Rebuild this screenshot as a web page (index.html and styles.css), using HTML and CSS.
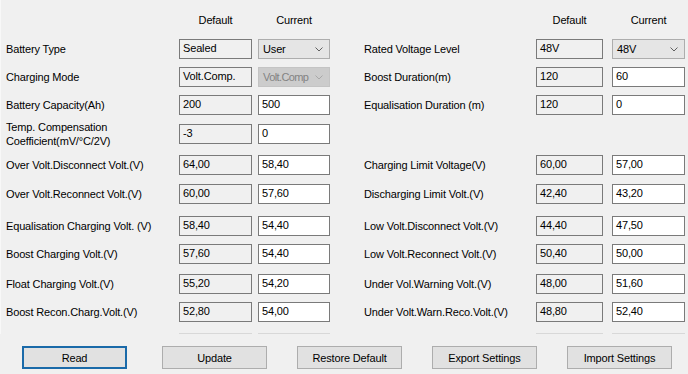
FILE: index.html
```html
<!DOCTYPE html>
<html>
<head>
<meta charset="utf-8">
<link rel="stylesheet" href="styles.css">
</head>
<body>
<div class="panel">
  <div class="grid">
    <div></div><div class="hdr">Default</div><div></div><div class="hdr">Current</div><div></div>
    <div></div><div class="hdr">Default</div><div></div><div class="hdr">Current</div>

    <div class="lbl">Battery Type</div><div class="box def">Sealed</div><div></div>
    <div class="combo"><span class="ctext">User</span><svg class="chev" width="8" height="5" viewBox="0 0 8 5"><polyline points="0.5,0.5 4,4 7.5,0.5" fill="none" stroke="#606060" stroke-width="1"/></svg></div><div></div>
    <div class="lbl">Rated Voltage Level</div><div class="box def">48V</div><div></div>
    <div class="combo"><span class="ctext">48V</span><svg class="chev" width="8" height="5" viewBox="0 0 8 5"><polyline points="0.5,0.5 4,4 7.5,0.5" fill="none" stroke="#606060" stroke-width="1"/></svg></div>

    <div class="lbl">Charging Mode</div><div class="box def">Volt.Comp.</div><div></div>
    <div class="combo disabled"><span class="ctext">Volt.Comp</span><svg class="chev" width="8" height="5" viewBox="0 0 8 5"><polyline points="0.5,0.5 4,4 7.5,0.5" fill="none" stroke="#a8a8a8" stroke-width="1"/></svg></div><div></div>
    <div class="lbl">Boost Duration(m)</div><div class="box def">120</div><div></div><div class="box cur">60</div>

    <div class="lbl">Battery Capacity(Ah)</div><div class="box def">200</div><div></div><div class="box cur">500</div><div></div>
    <div class="lbl">Equalisation Duration (m)</div><div class="box def">120</div><div></div><div class="box cur">0</div>

    <div class="lbl">Temp. Compensation<br>Coefficient(mV/°C/2V)</div><div class="box def">-3</div><div></div><div class="box cur">0</div><div></div>
    <div></div><div></div><div></div><div></div>

    <div class="lbl">Over Volt.Disconnect Volt.(V)</div><div class="box def">64,00</div><div></div><div class="box cur">58,40</div><div></div>
    <div class="lbl">Charging Limit Voltage(V)</div><div class="box def">60,00</div><div></div><div class="box cur">57,00</div>

    <div class="lbl">Over Volt.Reconnect Volt.(V)</div><div class="box def">60,00</div><div></div><div class="box cur">57,60</div><div></div>
    <div class="lbl">Discharging Limit Volt.(V)</div><div class="box def">42,40</div><div></div><div class="box cur">43,20</div>

    <div class="lbl">Equalisation Charging Volt. (V)</div><div class="box def">58,40</div><div></div><div class="box cur">54,40</div><div></div>
    <div class="lbl">Low Volt.Disconnect Volt.(V)</div><div class="box def">44,40</div><div></div><div class="box cur">47,50</div>

    <div class="lbl">Boost Charging Volt.(V)</div><div class="box def">57,60</div><div></div><div class="box cur">54,40</div><div></div>
    <div class="lbl">Low Volt.Reconnect Volt.(V)</div><div class="box def">50,40</div><div></div><div class="box cur">50,00</div>

    <div class="lbl">Float Charging Volt.(V)</div><div class="box def">55,20</div><div></div><div class="box cur">54,20</div><div></div>
    <div class="lbl">Under Vol.Warning Volt.(V)</div><div class="box def">48,00</div><div></div><div class="box cur">51,60</div>

    <div class="lbl">Boost Recon.Charg.Volt.(V)</div><div class="box def">52,80</div><div></div><div class="box cur">54,00</div><div></div>
    <div class="lbl">Under Volt.Warn.Reco.Volt.(V)</div><div class="box def">48,80</div><div></div><div class="box cur">52,40</div>

    <div></div><div class="ghost"></div><div></div><div class="ghost"></div><div></div>
    <div></div><div class="ghost"></div><div></div><div class="ghost"></div>
  </div>
</div>
<div class="buttons">
  <button class="btn focused">Read</button>
  <button class="btn">Update</button>
  <button class="btn">Restore Default</button>
  <button class="btn">Export Settings</button>
  <button class="btn">Import Settings</button>
</div>
</body>
</html>
```

FILE: styles.css
```css
html, body {
  margin: 0;
  padding: 0;
  background: #f0f0f0;
  width: 688px;
  height: 374px;
  overflow: hidden;
  font-family: "Liberation Sans", Arial, sans-serif;
  font-size: 11px;
  letter-spacing: -0.15px;
  color: #000;
}

.panel {
  height: 334px;
  overflow: hidden;
  padding-left: 6px;
  border-left: 1px solid #f8f8f8;
  box-sizing: border-box;
}

.grid {
  display: grid;
  grid-template-columns: 173px 73px 6px 72px 34px 172px 67px 9px 73px;
  grid-template-rows: 39px 28px 28px 29px 31px 29px 32px 28px 30px 28px 31px 20px;
  margin-left: -1px;
}

.hdr {
  text-align: center;
  padding-top: 13px;
  line-height: 14px;
  align-self: start;
}

.lbl {
  height: 20px;
  display: flex;
  align-items: center;
  line-height: 14px;
  white-space: nowrap;
  align-self: start;
}

.box {
  height: 20px;
  box-sizing: border-box;
  border: 1px solid #7a7a7a;
  padding: 0 3px;
  line-height: 17px;
  white-space: nowrap;
  overflow: hidden;
  align-self: start;
}

.def {
  background: #f0f0f0;
}

.cur {
  background: #ffffff;
}

.combo {
  height: 20px;
  box-sizing: border-box;
  border: 1px solid #adadad;
  background: #e5e5e5;
  padding: 0 5px 0 4px;
  line-height: 19px;
  display: flex;
  align-items: center;
  white-space: nowrap;
  overflow: hidden;
  align-self: start;
}

.ctext {
  flex: 1 1 auto;
  min-width: 0;
}

.combo.disabled {
  background: #cccccc;
  border-color: #c4c4c4;
  color: #838383;
}

.combo.disabled .ctext {
  letter-spacing: -0.6px;
}

.chev {
  display: block;
  flex: none;
  margin-right: 1px;
}

.ghost {
  height: 20px;
  border-top: 1px solid #d8d8d8;
  align-self: start;
}

.buttons {
  display: flex;
  gap: 30px;
  padding-left: 22px;
  margin-top: 12px;
}

.btn {
  width: 105px;
  height: 23px;
  box-sizing: border-box;
  border: 1px solid #adadad;
  background: #e1e1e1;
  font-family: "Liberation Sans", Arial, sans-serif;
  font-size: 11px;
  letter-spacing: -0.15px;
  color: #000;
  padding: 0;
  margin: 0;
  border-radius: 0;
}

.btn.focused {
  border: 2px solid #1a6aa9;
  margin-right: 5px;
}
```
